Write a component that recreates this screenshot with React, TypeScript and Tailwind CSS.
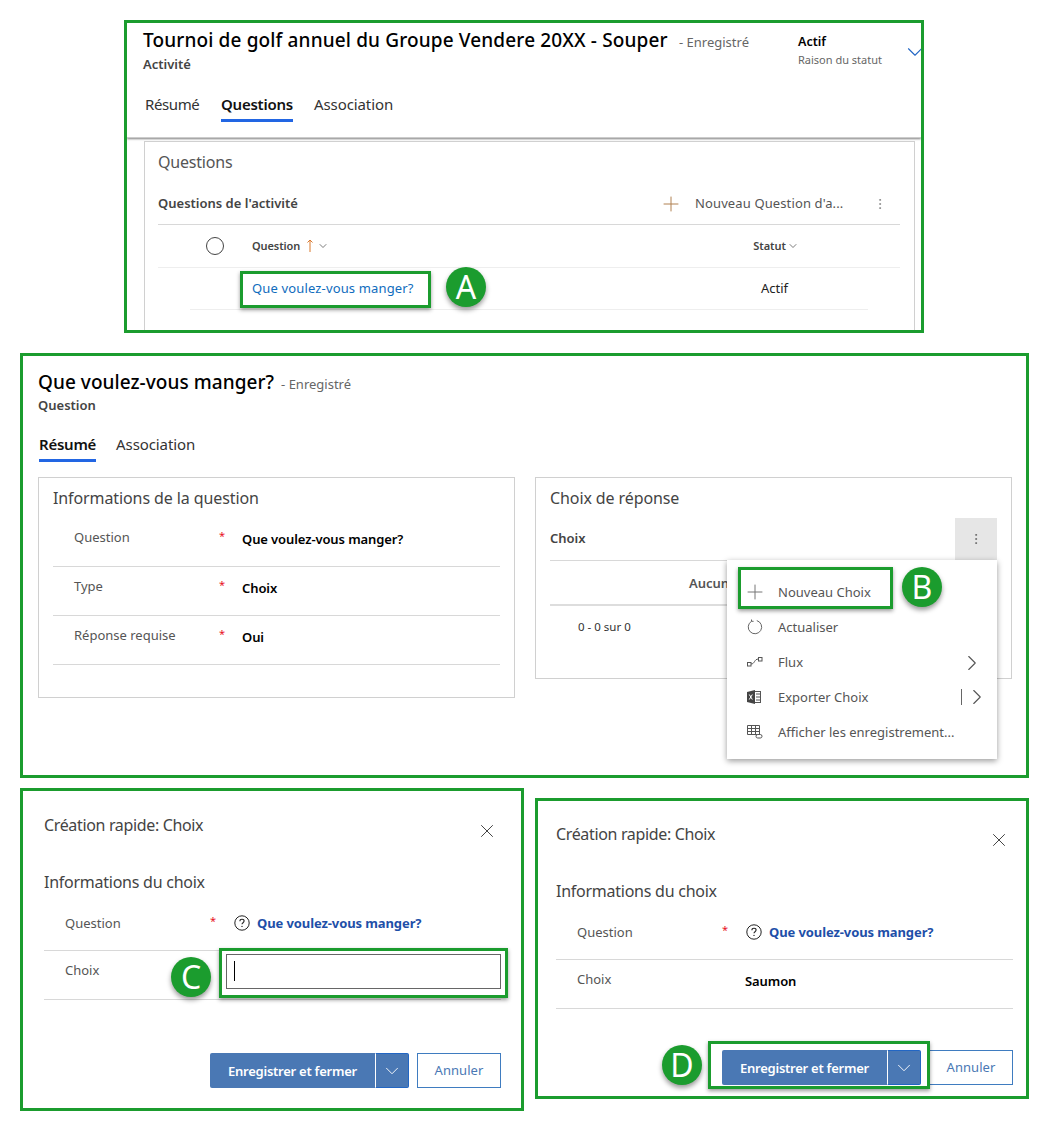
import React from "react";
import { Plus, ChevronDown, ChevronRight, X, MoreVertical } from "lucide-react";

const font = { fontFamily: '"Noto Sans", "Open Sans", sans-serif' };

function Badge({ letter, className }: { letter: string; className: string }) {
  return (
    <div className={"absolute w-[40px] h-[40px] rounded-full bg-[#1b9c2e] text-white text-[32px] leading-[40px] text-center shadow-[0_3px_5px_rgba(0,0,0,0.4)] " + className}>
      {letter}
    </div>
  );
}

function Hl({ className }: { className: string }) {
  return <div className={"absolute border-[3px] border-[#1b9c2e] shadow-[0_2px_4px_rgba(0,0,0,0.4)] " + className} />;
}

function Tab({ label, active, className }: { label: string; active?: boolean; className?: string }) {
  return (
    <div className={"h-[28px] text-[15px] leading-[20px] whitespace-nowrap " + (active ? "font-semibold text-[#111] tracking-[-0.25px] border-b-[3px] border-[#2266e3] " : "text-[#333] tracking-[-0.1px] ") + (className ?? "")}>
      {label}
    </div>
  );
}

function Help() {
  return (
    <svg width="16" height="16" viewBox="0 0 16 16" fill="none" className="shrink-0">
      <circle cx="8" cy="8" r="7.2" stroke="#222" strokeWidth="1" />
      <path d="M5.9 6.2c0-1.2 1-1.9 2.1-1.9s2.1.7 2.1 1.8c0 1.6-2.1 1.6-2.1 3.2" stroke="#222" strokeWidth="1.1" />
      <circle cx="8" cy="11.4" r=".7" fill="#222" />
    </svg>
  );
}

function InfoRow({ label, req, value, first }: { label: string; req?: boolean; value: React.ReactNode; first?: boolean }) {
  return (
    <div className="flex h-[49px] border-b border-[#d8d8d8]">
      <div className={"w-[165px] pl-[21px] text-[13px] leading-[18px] text-[#555] " + (first ? "pt-[12px]" : "pt-[10px]")}>{label}</div>
      <div className={"w-[24px] text-[11px] leading-[16px] text-[#e81123] " + (first ? "pt-[11px]" : "pt-[10px]")}>
        <span className="ml-[1px]">{req ? "*" : ""}</span>
      </div>
      <div className={"flex-1 text-[13px] leading-[18px] font-semibold text-black tracking-[-0.1px] " + (first ? "pt-[13px]" : "pt-[12px]")}>{value}</div>
    </div>
  );
}

function MenuItem({ icon, label, right }: { icon: React.ReactNode; label: string; right?: React.ReactNode }) {
  return (
    <div className="h-[35px] flex items-center text-[13px] text-[#555]">
      <div className="w-[51px] pl-[20px] flex justify-start">{icon}</div>
      <div className="flex-1 whitespace-nowrap">{label}</div>
      {right}
    </div>
  );
}

function Link() {
  return (
    <div className="flex items-center gap-[7px] -mt-[1px] text-[#1e4fa8] font-bold tracking-[-0.1px]">
      <span className="ml-[1px]"><Help /></span>
      <span>Que voulez-vous manger?</span>
    </div>
  );
}

function QuickCreate({ children, footerPad, padX, headH, titlePad }: { children: React.ReactNode; footerPad: string; padX: string; headH: string; titlePad: string }) {
  return (
    <div className={padX}>
      <div className={"flex justify-between " + headH + " " + titlePad}>
        <div className="text-[16px] leading-[22px] text-[#444] tracking-[-0.35px]">Création rapide: Choix</div>
        <X size={22} strokeWidth={1} className="text-[#333] mt-[6px] mr-[3px]" />
      </div>
      <div className="text-[16px] leading-[22px] text-[#444] mt-[18px] tracking-[-0.25px]">Informations du choix</div>
      <div className="mt-[9px]">{children}</div>
      <div className={"flex justify-end " + footerPad}>
        <div className="flex h-[35px]">
          <div className="w-[165px] bg-[#4a78b4] rounded-l-[2px] text-white text-[13px] font-semibold leading-[36px] text-center tracking-[-0.25px]">Enregistrer et fermer</div>
          <div className="w-[34px] bg-[#4a78b4] border border-[#2266c4] border-l-white rounded-r-[2px] flex items-center justify-center">
            <ChevronDown size={22} strokeWidth={1} className="text-white" />
          </div>
          <div className="w-[84px] ml-[8px] border border-[#3f7cc0] text-[#4a78b4] text-[13px] leading-[33px] text-center tracking-[0.05px]">Annuler</div>
        </div>
      </div>
    </div>
  );
}

export default function App() {
  return (
    <div style={font} className="w-[1048px] h-[1122px] bg-white pt-[20px] overflow-hidden text-[#333]">
      {/* Panel A */}
      <div className="relative ml-[124px] w-[800px] h-[313px] border-[3px] border-[#1b9c2e] overflow-hidden">
        <div className="h-[115px] shadow-[0_1px_2px_rgba(0,0,0,0.5)] border-b border-[#ccc] pl-[16px]">
          <div className="flex pt-[4px] h-[30px]">
            <div className="w-[536px] text-[19px] leading-[26px] font-medium text-black tracking-[0.14px] whitespace-nowrap">Tournoi de golf annuel du Groupe Vendere 20XX - Souper</div>
            <div className="w-[119px] pt-[6px] text-[13px] leading-[18px] text-[#666]">- Enregistré</div>
            <div className="pt-[6px]">
              <div className="text-[12.5px] leading-[18px] font-semibold text-black">Actif</div>
              <div className="text-[11px] leading-[16px] text-[#666] mt-[1px]">Raison du statut</div>
            </div>
            <ChevronDown size={26} strokeWidth={1} className="absolute left-[775px] top-[16px] text-[#2266c4]" />
          </div>
          <div className="text-[13px] leading-[18px] font-semibold text-[#444] mt-[2px]">Activité</div>
          <div className="flex mt-[21px] ml-[2px]">
            <Tab label="Résumé" className="w-[54px] !tracking-[-0.4px]" />
            <Tab label="Questions" active className="w-[72px] ml-[22px]" />
            <Tab label="Association" className="ml-[21px]" />
          </div>
        </div>
        <div className="ml-[17px] mt-[3px] w-[771px] h-[220px] border border-[#d0d0d0] px-[13px]">
          <div className="pt-[9px] text-[16px] leading-[22px] text-[#555] tracking-[-0.2px]">Questions</div>
          <div className="flex items-center h-[44px] mt-[8px] pt-[3px] border-b border-[#d8d8d8] w-[742px]">
            <div className="w-[501px] text-[13px] font-semibold text-[#444]">Questions de l'activité</div>
            <Plus size={24} strokeWidth={1} className="text-[#b08050]" />
            <div className="ml-[12px] w-[150px] text-[13px] text-[#555] whitespace-nowrap tracking-[0.12px]">Nouveau Question d'a...</div>
            <MoreVertical size={14} strokeWidth={1.2} className="text-[#777] ml-[28px]" />
          </div>
          <div className="flex items-center h-[43px] border-b border-[#eee] w-[742px]">
            <div className="ml-[48px] w-[18px] h-[18px] rounded-full border border-[#444]" />
            <div className="ml-[28px] pt-[1px] text-[11px] font-semibold text-[#444] tracking-[-0.1px]">Question</div>
            <svg width="8" height="14" viewBox="0 0 8 14" fill="none" className="ml-[6px]"><path d="M4 13V1M1.5 3.5 4 1l2.5 2.5" stroke="#d9782d" /></svg>
            <ChevronDown size={12} strokeWidth={1.4} className="ml-[3px] text-[#444]" />
            <div className="ml-[424px] text-[11px] font-semibold text-[#444]">Statut</div>
            <ChevronDown size={12} strokeWidth={1.4} className="ml-[1px] text-[#444]" />
          </div>
          <div className="flex items-center h-[42px] ml-[32px] pt-[1px] w-[678px] border-b border-[#eee]">
            <div className="ml-[62px] w-[509px] text-[13px] text-[#0f6cbd] tracking-[0.15px]">Que voulez-vous manger?</div>
            <div className="text-[13px] text-[#222]">Actif</div>
          </div>
        </div>
        <Hl className="left-[113px] top-[248px] w-[191px] h-[37px]" />
        <Badge letter="A" className="left-[319px] top-[244px]" />
      </div>

      {/* Panel B */}
      <div className="relative ml-[20px] mt-[20px] w-[1009px] h-[425px] border-[3px] border-[#1b9c2e] pl-[15px]">
        <div className="flex items-baseline pt-[13px]">
          <div className="text-[19px] leading-[26px] font-medium text-black tracking-[0.05px]">Que voulez-vous manger?</div>
          <div className="ml-[7px] text-[13px] text-[#666]">- Enregistré</div>
        </div>
        <div className="mt-[1px] text-[13px] leading-[18px] font-semibold text-[#444]">Question</div>
        <div className="flex gap-[20px] mt-[20px] ml-[1px]">
          <Tab label="Résumé" active />
          <Tab label="Association" />
        </div>
        <div className="flex mt-[15px] items-start gap-[20px]">
          <div className="w-[477px] h-[221px] border border-[#d0d0d0] px-[14px]">
            <div className="pt-[9px] text-[16px] leading-[22px] text-[#444] tracking-[-0.1px]">Informations de la question</div>
            <div className="mt-[9px]">
              <InfoRow label="Question" req value="Que voulez-vous manger?" />
              <InfoRow label="Type" req value="Choix" />
              <InfoRow label="Réponse requise" req value="Oui" />
            </div>
          </div>
          <div className="w-[477px] h-[202px] border border-[#d0d0d0] px-[14px]">
            <div className="pt-[9px] text-[16px] leading-[22px] text-[#444] tracking-[-0.1px]">Choix de réponse</div>
            <div className="flex items-center justify-between h-[43px] mt-[9px] border-b border-[#d8d8d8]">
              <div className="text-[13px] font-semibold text-[#444]">Choix</div>
              <div className="w-[42px] h-[42px] bg-[#e6e6e6] flex items-center justify-center">
                <MoreVertical size={14} strokeWidth={1.2} className="text-[#555]" />
              </div>
            </div>
            <div className="h-[45px] border-b-2 border-[#ddd] pt-[13px] pl-[139px] text-[13px] font-semibold text-[#555] leading-[18px]">Aucune donnée</div>
            <div className="pt-[13px] pl-[28px] text-[11.5px] leading-[16px] text-[#333]">0 - 0 sur 0</div>
          </div>
        </div>
        <div className="absolute left-[704px] top-[204px] w-[270px] h-[199px] bg-white shadow-[0_2px_6px_rgba(0,0,0,0.4)] pt-[15px]">
          <MenuItem icon={<Plus size={24} strokeWidth={1} className="text-[#777] -ml-[4px] -mt-[2px]" />} label="Nouveau Choix" />
          <MenuItem
            icon={
              <svg width="16" height="16" viewBox="0 0 16 16" fill="none" className="-mt-[2px]"><path d="M4.5 2.3A6.7 6.7 0 1 0 9.8 1.6M4.5 2.3V.5M4.5 2.3H6.6" stroke="#555" strokeWidth=".9" /></svg>
            }
            label="Actualiser"
          />
          <MenuItem
            icon={
              <svg width="16" height="14" viewBox="0 0 16 14" fill="none" className="-mt-[2px]"><rect x=".5" y="7.5" width="3.5" height="3.5" stroke="#555" /><rect x="11.5" y="2.5" width="3.5" height="3.5" stroke="#555" /><path d="M4 9c4 0 3-5 7.5-5" stroke="#555" /></svg>
            }
            label="Flux"
            right={<ChevronRight size={26} strokeWidth={1} className="text-[#555] mr-[12px]" />}
          />
          <MenuItem
            icon={
              <svg width="16" height="16" viewBox="0 0 16 16" fill="none" className="-mt-[2px]"><rect x="6" y="2.5" width="7.5" height="11" stroke="#555" /><path d="M9 5h4M9 8h4M9 11h4" stroke="#555" /><path d="M0 3l8-2v14l-8-2z" fill="#444" /><path d="M2.3 5.5l3 5M5.3 5.5l-3 5" stroke="#fff" /></svg>
            }
            label="Exporter Choix"
            right={
              <div className="flex items-center mr-[7px] -mt-[2px]">
                <div className="w-px h-[16px] bg-[#666] mr-[2px]" />
                <ChevronRight size={26} strokeWidth={1} className="text-[#555]" />
              </div>
            }
          />
          <MenuItem
            icon={
              <svg width="16" height="16" viewBox="0 0 16 16" fill="none" className="-mt-[2px]"><path d="M.5 1.5h12v9H.5zM.5 4.5h12M.5 7.5h12M4.5 1.5v9M8.5 1.5v9" stroke="#555" /><rect x="9" y="10.5" width="6" height="3.5" rx="1.7" fill="#fff" stroke="#555" /></svg>
            }
            label="Afficher les enregistrement..."
          />
        </div>
        <Hl className="left-[715px] top-[211px] w-[155px] h-[42px]" />
        <Badge letter="B" className="left-[879px] top-[211px]" />
      </div>

      {/* Bottom panels */}
      <div className="flex items-start mt-[10px] ml-[20px] gap-[11px]">
        <div className="relative w-[504px] h-[323px] border-[3px] border-[#1b9c2e]">
          <QuickCreate padX="pl-[21px] pr-[20px]" headH="h-[62px]" titlePad="pt-[23px]" footerPad="pt-[53px]">
            <InfoRow label="Question" req first value={<Link />} />
            <InfoRow label="Choix" value="" />
          </QuickCreate>
          <div className="absolute left-[203px] top-[163px] w-[275px] h-[35px] border border-[#666] bg-white">
            <div className="ml-[7px] mt-[6px] w-px h-[20px] bg-black" />
          </div>
          <Hl className="left-[196px] top-[157px] w-[289px] h-[50px]" />
          <Badge letter="C" className="left-[148px] top-[166px]" />
        </div>

        <div className="relative w-[494px] h-[301px] mt-[10px] border-[3px] border-[#1b9c2e]">
          <QuickCreate padX="pl-[18px] pr-[13px]" headH="h-[61px]" titlePad="pt-[22px]" footerPad="pt-[41px]">
            <InfoRow label="Question" req first value={<Link />} />
            <InfoRow label="Choix" value="Saumon" />
          </QuickCreate>
          <Hl className="left-[170px] top-[240px] w-[222px] h-[48px]" />
          <Badge letter="D" className="left-[124px] top-[244px]" />
        </div>
      </div>
    </div>
  );
}
